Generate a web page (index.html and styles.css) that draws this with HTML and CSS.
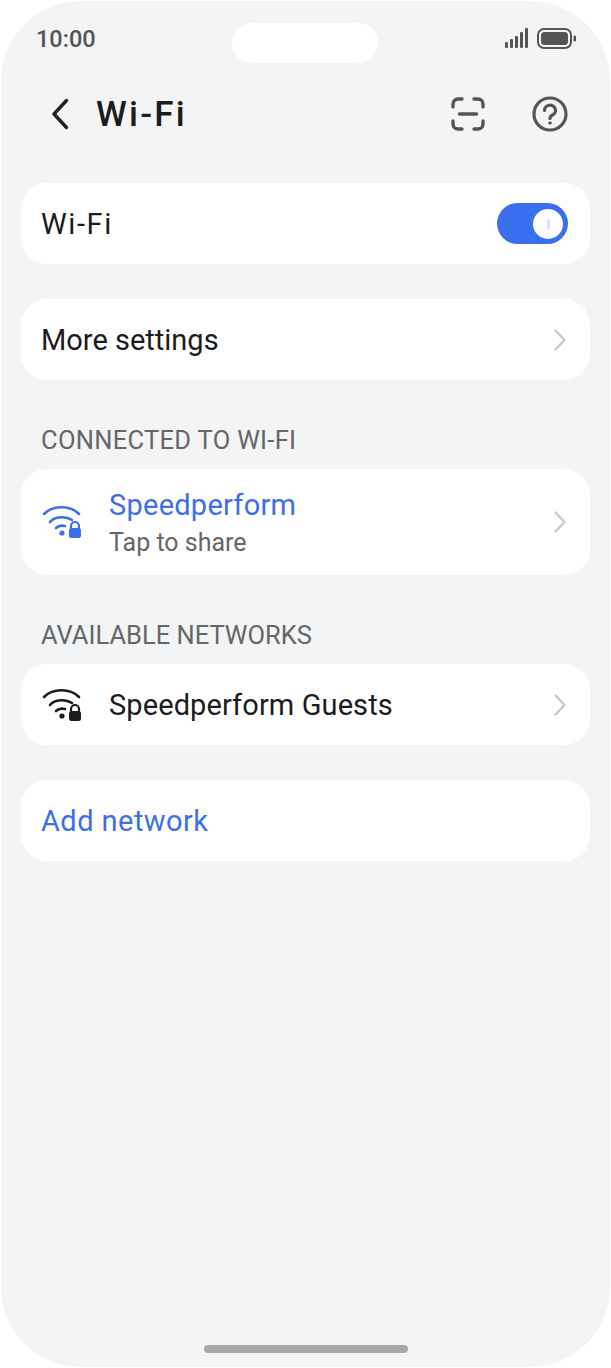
FILE: index.html
```html
<!DOCTYPE html>
<html lang="en">
<head>
    <meta charset="UTF-8">
    <meta name="viewport" content="width=device-width, initial-scale=1.0">
    <title>Wi-Fi</title>
    <link rel="stylesheet" href="styles.css">
</head>
<body>

    <div class="phone">
        <div class="status-bar">
            <span class="time">10:00</span>
            <div class="notch"></div>
            <div class="status-icons">
                <svg width="24" height="21" viewBox="0 0 24 21" fill="#555">
                    <rect x="0" y="14" width="3" height="6" rx="1"/>
                    <rect x="5" y="11" width="3" height="9" rx="1"/>
                    <rect x="10" y="8" width="3" height="12" rx="1"/>
                    <rect x="15" y="4" width="3" height="16" rx="1"/>
                    <rect x="20" y="0" width="3" height="20" rx="1"/>
                </svg>
                <svg width="40" height="21" viewBox="0 0 40 21" fill="none">
                    <rect x="1" y="1" width="33" height="19" rx="6" stroke="#555" stroke-width="2"/>
                    <rect x="4" y="4" width="27" height="13" rx="3.5" fill="#555"/>
                    <rect x="36.5" y="7.5" width="2.5" height="6" rx="1.2" fill="#555"/>
                </svg>
            </div>
        </div>

        <div class="title-bar">
            <svg class="back" width="20" height="32" viewBox="0 0 20 32" fill="none">
                <path d="M16.5 2.5 L4 16 L16.5 29.5" stroke="#222" stroke-width="3.4" stroke-linecap="round" stroke-linejoin="round"/>
            </svg>
            <h1>Wi-Fi</h1>
            <svg class="scan" width="34" height="34" viewBox="0 0 34 34" fill="none" stroke="#555" stroke-width="3.4" stroke-linecap="round">
                <path d="M11 2 H7 A5 5 0 0 0 2 7 V10"/>
                <path d="M23 2 H27 A5 5 0 0 1 32 7 V10"/>
                <path d="M11 32 H7 A5 5 0 0 1 2 27 V24"/>
                <path d="M23 32 H27 A5 5 0 0 0 32 27 V24"/>
                <path d="M8.5 17 H25.5"/>
            </svg>
            <svg class="help" width="36" height="36" viewBox="0 0 36 36" fill="none" stroke="#555" stroke-width="3.2" stroke-linecap="round">
                <circle cx="18" cy="18" r="16"/>
                <path d="M12.5 14.5 A5.5 5.2 0 1 1 20.5 19 C18.5 20 18 21 18 22.5"/>
                <circle cx="18" cy="27" r="1.2" fill="#555" stroke-width="1"/>
            </svg>
        </div>

        <div class="card row">
            <span class="label wide">Wi-Fi</span>
            <div class="switch"><div class="knob"><div class="knob-mark"></div></div></div>
        </div>

        <div class="card row">
            <span class="label">More settings</span>
            <svg class="chevron" width="12" height="22" viewBox="0 0 12 22" fill="none"><path d="M1.5 1.5 L10.5 11 L1.5 20.5" stroke="#c8c8c8" stroke-width="2.4" stroke-linecap="round" stroke-linejoin="round"/></svg>
        </div>

        <div class="section-title connected-title">CONNECTED TO WI-FI</div>
        <div class="card row network connected">
            <svg class="wifi" width="42" height="36" viewBox="0 0 42 36" fill="none" stroke="#3e6fe8" stroke-width="2.6" stroke-linecap="round">
                <path d="M3 10 C12 1 29 1 38 10"/>
                <path d="M9 18 C14 12 25 12 31 16"/>
                <path d="M15 24 C17 22 20 21 24 22"/>
                <circle cx="21" cy="29" r="2.6" fill="#3e6fe8" stroke="none"/>
                <path d="M30 24 V22 A4 4 0 0 1 38 22 V24" stroke-width="2.2"/>
                <rect x="28" y="24" width="12" height="10" rx="2.5" fill="#3e6fe8" stroke="none"/>
            </svg>
            <div class="network-text">
                <div class="label">Speedperform</div>
                <div class="sub">Tap to share</div>
            </div>
            <svg class="chevron" width="12" height="22" viewBox="0 0 12 22" fill="none"><path d="M1.5 1.5 L10.5 11 L1.5 20.5" stroke="#c8c8c8" stroke-width="2.4" stroke-linecap="round" stroke-linejoin="round"/></svg>
        </div>

        <div class="section-title">AVAILABLE NETWORKS</div>
        <div class="card row network">
            <svg class="wifi" width="42" height="36" viewBox="0 0 42 36" fill="none" stroke="#1c1c1c" stroke-width="2.6" stroke-linecap="round">
                <path d="M3 10 C12 1 29 1 38 10"/>
                <path d="M9 18 C14 12 25 12 31 16"/>
                <path d="M15 24 C17 22 20 21 24 22"/>
                <circle cx="21" cy="29" r="2.6" fill="#1c1c1c" stroke="none"/>
                <path d="M30 24 V22 A4 4 0 0 1 38 22 V24" stroke-width="2.2"/>
                <rect x="28" y="24" width="12" height="10" rx="2.5" fill="#1c1c1c" stroke="none"/>
            </svg>
            <span class="label guests">Speedperform Guests</span>
            <svg class="chevron" width="12" height="22" viewBox="0 0 12 22" fill="none"><path d="M1.5 1.5 L10.5 11 L1.5 20.5" stroke="#c8c8c8" stroke-width="2.4" stroke-linecap="round" stroke-linejoin="round"/></svg>
        </div>

        <div class="card row add">
            <span class="label">Add network</span>
        </div>

        <div class="home-bar"></div>
    </div>

</body>
</html>
```

FILE: styles.css
```css
body {
    margin: 0;
    background-color: white;
    font-family: Roboto, "Noto Sans", sans-serif;
    color: #1c1c1c;
}

.phone {
    width: 609px;
    height: 1366px;
    margin: 1px;
    border-radius: 80px;
    background-color: #f2f4f6;
    overflow: hidden;
    display: flex;
    flex-direction: column;
    align-items: center;
}

.status-bar {
    width: 100%;
    height: 60px;
    margin-top: 22px;
    box-sizing: border-box;
    padding: 0 33px 0 35px;
    display: grid;
    grid-template-columns: 196px 146px 1fr;
    align-items: start;
}

.time {
    font-size: 23.5px;
    font-weight: 500;
    color: #555;
    line-height: 32px;
}

.notch {
    height: 40px;
    border-radius: 20px;
    background-color: white;
}

.status-icons {
    display: flex;
    justify-content: flex-end;
    align-items: center;
    gap: 8px;
    margin-top: 5px;
}

.title-bar {
    width: 100%;
    height: 62px;
    box-sizing: border-box;
    padding: 0 42px 0 49px;
    display: flex;
    align-items: center;
    margin-bottom: 38px;
}

.title-bar h1 {
    margin: 0 0 0 26px;
    flex: 1;
    font-size: 35px;
    font-weight: 500;
    letter-spacing: 2.2px;
    color: #1c1c1c;
}

.help {
    margin-left: 47px;
}

.card {
    width: 569px;
    height: 81px;
    box-sizing: border-box;
    padding: 0 22px 0 20px;
    border-radius: 26px;
    background-color: white;
    margin-bottom: 35px;
    flex-shrink: 0;
}

.row {
    display: flex;
    align-items: center;
}

.label {
    font-size: 29px;
    color: #1c1c1c;
    flex: 1;
}

.wide {
    letter-spacing: 1.6px;
}

.guests {
    letter-spacing: 0.1px;
}

.chevron {
    margin-right: 2px;
}

.switch {
    width: 71px;
    height: 41px;
    border-radius: 21px;
    background-color: #3a6ff0;
    display: flex;
    justify-content: flex-end;
    align-items: center;
    padding-right: 5px;
    box-sizing: border-box;
}

.knob {
    width: 30px;
    height: 30px;
    border-radius: 50%;
    background-color: white;
    display: flex;
    justify-content: center;
    align-items: center;
}

.knob-mark {
    width: 3px;
    height: 10px;
    border-radius: 2px;
    background-color: #d6e2fb;
}

.section-title {
    width: 569px;
    box-sizing: border-box;
    padding-left: 20px;
    height: 54px;
    line-height: 50px;
    font-size: 25.5px;
    color: #666;
}

.connected-title {
    letter-spacing: 0.3px;
}

.network {
    gap: 26px;
}

.network-text {
    flex: 1;
    padding-top: 3px;
}

.connected {
    height: 106px;
}

.connected .label {
    color: #3e6fe8;
    line-height: 38px;
    letter-spacing: 0.25px;
}

.sub {
    font-size: 25px;
    color: #666;
    line-height: 38px;
}

.add .label {
    color: #3e6fe8;
    letter-spacing: 0.45px;
}

.home-bar {
    width: 204px;
    height: 8px;
    border-radius: 4px;
    background-color: #a8a8a8;
    margin-top: auto;
    margin-bottom: 14px;
}
```
